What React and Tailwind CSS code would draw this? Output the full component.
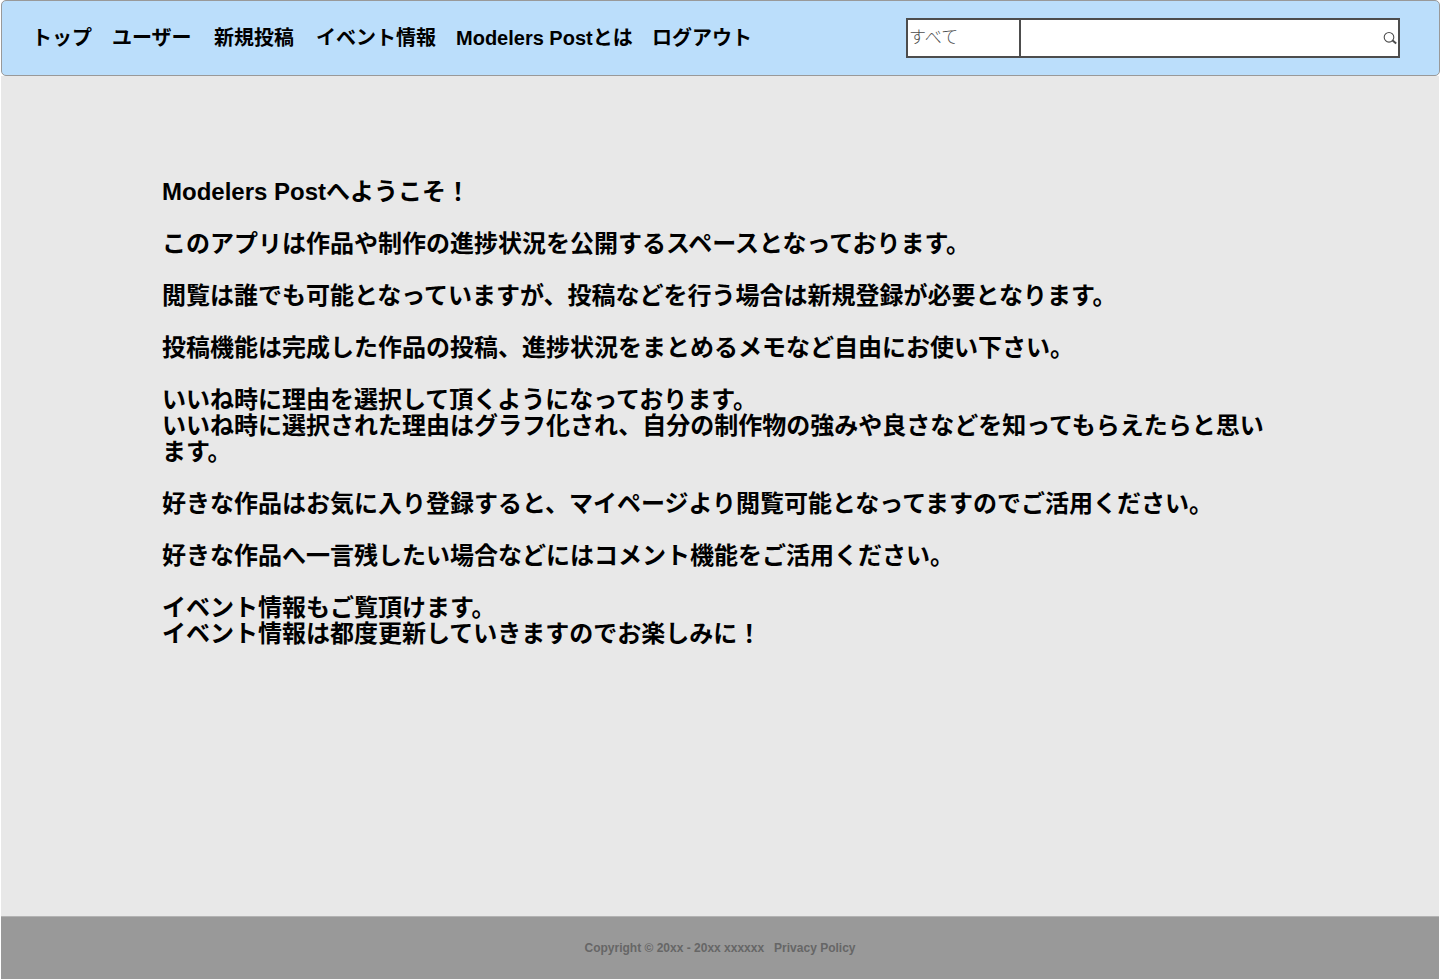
const links = [
  ["トップ", "w-20"],
  ["ユーザー", "w-[102px]"],
  ["新規投稿", "w-[102px]"],
  ["イベント情報", "w-[140px]"],
  ["Modelers Postとは", "w-[196px]"],
  ["ログアウト", "w-[100px]"],
];

const paragraphs = [
  ["Modelers Postへようこそ！"],
  ["このアプリは作品や制作の進捗状況を公開するスペースとなっております。"],
  ["閲覧は誰でも可能となっていますが、投稿などを行う場合は新規登録が必要となります。"],
  ["投稿機能は完成した作品の投稿、進捗状況をまとめるメモなど自由にお使い下さい。"],
  [
    "いいね時に理由を選択して頂くようになっております。",
    "いいね時に選択された理由はグラフ化され、自分の制作物の強みや良さなどを知ってもらえたらと思います。",
  ],
  ["好きな作品はお気に入り登録すると、マイページより閲覧可能となってますのでご活用ください。"],
  ["好きな作品へ一言残したい場合などにはコメント機能をご活用ください。"],
  ["イベント情報もご覧頂けます。", "イベント情報は都度更新していきますのでお楽しみに！"],
];

export default function App() {
  return (
    <div className="flex min-h-screen flex-col bg-white px-px pb-px font-['Liberation_Sans','Noto_Sans_CJK_JP',sans-serif] text-black">
      <header className="-mr-px flex h-[76px] items-center justify-between rounded-[5px] border border-[#999999] bg-[#bbdefb] pr-[39px] pl-[30px]">
        <nav className="flex text-xl leading-6 font-bold whitespace-nowrap">
          {links.map(([label, width]) => (
            <a key={label} href="#" className={width}>
              {label}
            </a>
          ))}
        </nav>
        <form role="search" className="flex h-10 w-[494px]" onSubmit={(e) => e.preventDefault()}>
          <select
            aria-label="検索対象"
            className="w-[115px] appearance-none border-2 border-[#4d4d4d] bg-white pl-px text-[17px] font-light text-[#4d4d4d]"
          >
            <option>すべて</option>
          </select>
          <div className="-ml-0.5 flex flex-1 items-center border-2 border-[#4d4d4d] bg-white pr-px">
            <input aria-label="検索" type="text" className="min-w-0 flex-1 px-1 text-base outline-none" />
            <button type="submit" aria-label="検索する">
              <svg width="14" height="14" viewBox="0 0 14 14" fill="none" stroke="#4d4d4d">
                <circle cx="6" cy="6.3" r="4.8" strokeWidth="1.1" />
                <path d="M9.3 9.2 13.2 12.4" strokeWidth="2" />
              </svg>
            </button>
          </div>
        </form>
      </header>
      <main className="flex-1 bg-[#e8e8e8] px-[161px] pt-[103px]">
        <div className="flex flex-col gap-[26px] text-2xl leading-[26px] font-bold">
          {paragraphs.map((lines) => (
            <p key={lines[0]}>
              {lines.map((line) => (
                <span key={line} className="block">
                  {line}
                </span>
              ))}
            </p>
          ))}
        </div>
      </main>
      <footer className="flex h-[63px] items-center justify-center gap-2.5 border-t border-[#b3b3b3] bg-[#999999] text-xs font-bold text-[#666666]">
        <span>Copyright © 20xx - 20xx xxxxxx</span>
        <a href="#">Privacy Policy</a>
      </footer>
    </div>
  );
}
